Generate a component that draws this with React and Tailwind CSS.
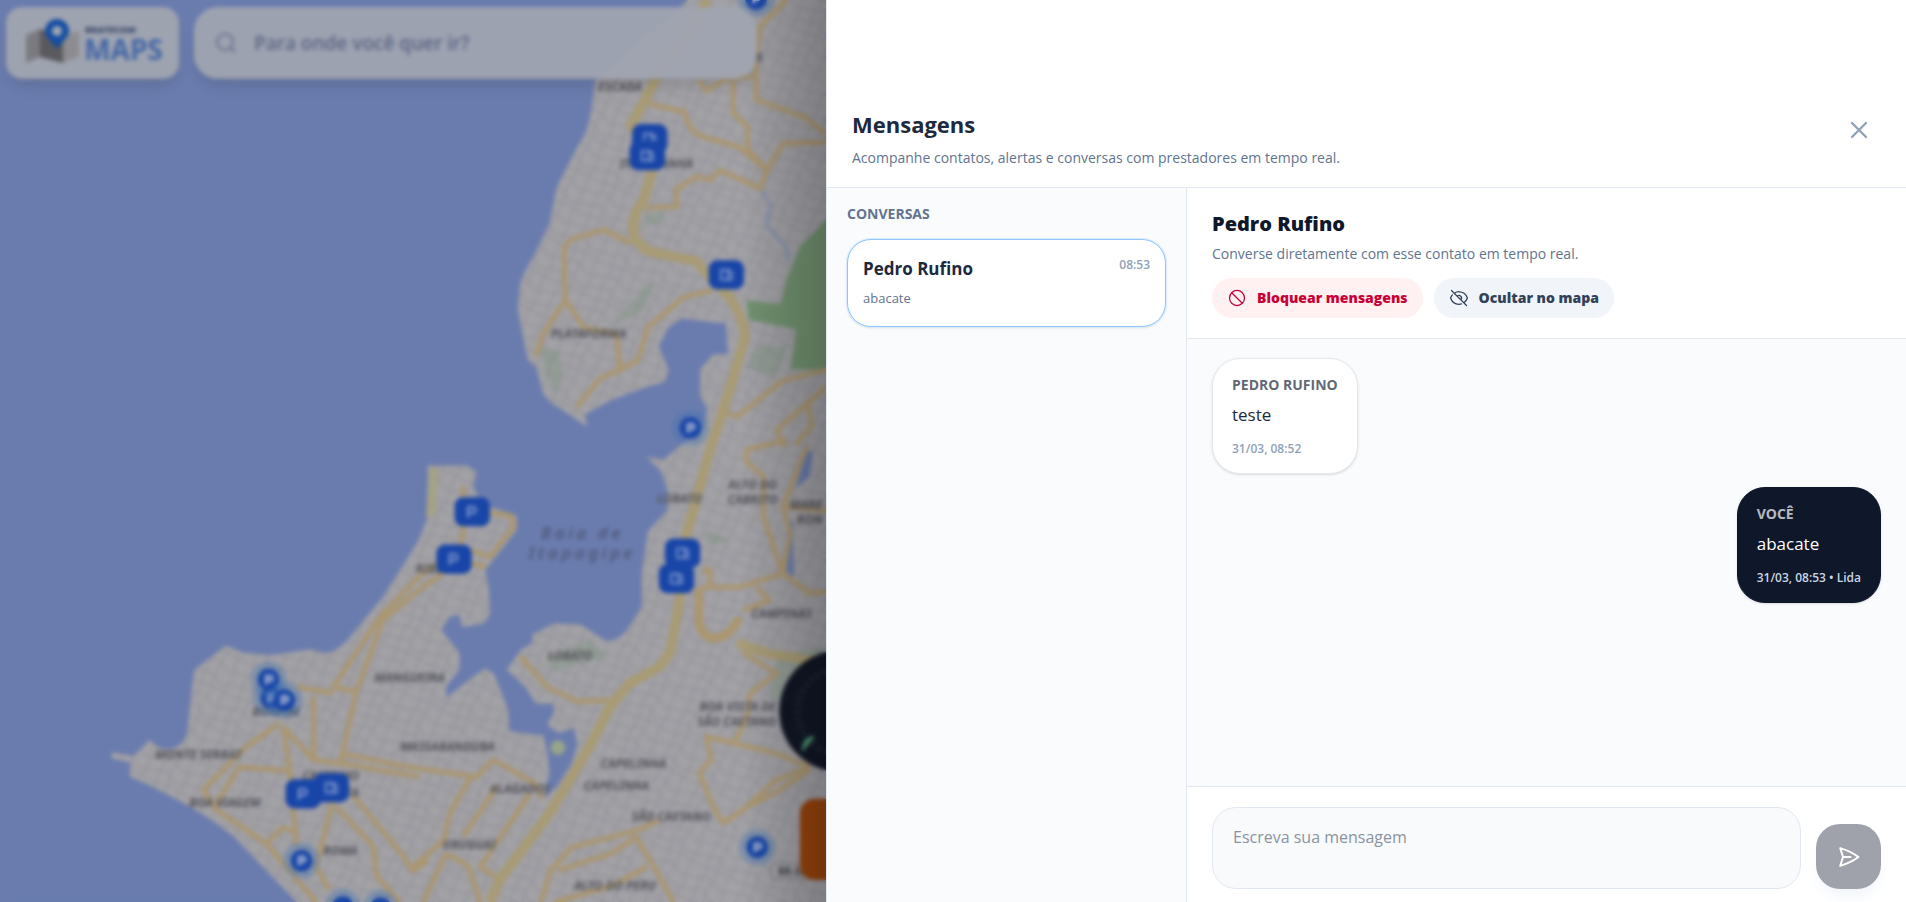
import React, { useState } from "react";
import {
  HiOutlineEyeSlash,
  HiOutlineNoSymbol,
  HiOutlinePaperAirplane,
  HiOutlineXMark,
} from "react-icons/hi2";
import { LuSearch } from "react-icons/lu";

const coast =
  "M566 0 L490 66 L486 93 Q484 108 475 121 L458 154 L452 184 L439 211 Q428 228 427 239 L426 255 L434 296 L441 302 L447 324 Q452 332 461 336 L483 351 L481 341 L503 329 L530 319 L547 314 L550 304 L542 285 L550 269 L561 262 L586 265 L597 266 L599 291 L586 292 L576 304 L576 326 L582 337 L578 352 L565 362 L546 378 L532 376 L544 388 L549 403 L549 420 L533 437 L528 472 L528 499 L516 518 Q508 528 498 527 L478 514 L456 513 L438 522 L438 529 L428 535 L417 551 L432 565 L441 579 L455 579 L456 586 L450 596 L459 603 L472 599 L475 612 L470 628 L459 646 L447 657 L452 636 L450 617 L447 605 L428 603 L419 601 L418 584 L412 568 L406 554 L399 550 L389 557 L367 574 L367 565 L378 551 L378 537 L363 518 L370 507 L378 506 L380 516 L398 513 L403 505 L402 483 L399 469 L425 436 L425 424 L406 418 L396 413 L389 400 L392 388 L384 383 L352 383 L351 428 L344 445 L333 463 L315 491 L288 524 Q276 538 266 537 L255 534 L223 539 L200 537 L186 531 L160 551 L158 565 L154 603 Q150 615 140 616 L132 616 L123 609 L110 622 L92 619 L92 624 L107 627 L107 639 L123 646 L148 659 Q172 672 192 688 L219 716 L244 742 L680 742 L680 0 Z";

const highways = [
  "M582 0 L560 36 L539 66 L529 85 L519 103 L535 128 L536 143 L529 165 Q520 176 521 190 Q523 202 535 207 L573 215 L584 228 L600 244 Q612 262 613 277 L600 321 L584 370 L564 442 L559 494 L551 537 L543 548 L518 562 L502 581 L485 614 L452 669 L411 724 L403 742",
  "M606 529 L633 538 L680 545",
];

const roads = [
  "M533 85 L563 92 Q567 108 577 112 L608 121 L631 140 L625 155 L610 148 L592 140 L584 148 L573 145 L556 156 L557 170 L530 171",
  "M631 140 L644 118 L680 117",
  "M603 66 L603 93 L615 104 L615 123 L631 140",
  "M647 0 L625 22 L622 47 L622 82 L661 96 L680 110",
  "M575 66 L581 75 L595 66 L619 63",
  "M519 200 L497 189 L472 196 Q464 200 464 208 L465 247 L447 274 L441 293",
  "M465 247 L481 270 L507 274 L510 304 L494 311 L474 335",
  "M510 304 L525 296 L533 269 L563 244 L586 239",
  "M680 304 L644 313 L606 343 L597 340",
  "M680 318 L664 332 L639 354 L646 368",
  "M664 332 L668 350 L654 366",
  "M647 362 L614 370 L614 380 L628 392 L628 425 L644 472 L608 483 L578 483",
  "M664 367 L644 417 L650 439 L644 472 L666 488 L680 487",
  "M644 417 L680 420",
  "M578 470 L584 468 L584 483 M611 502 L622 498 L633 494 L622 483",
  "M611 537 L639 554 L617 570 L614 592 L603 612",
  "M666 631 L639 620 L581 606 L585 625 L575 636 L588 666 L595 677 L614 664 L638 652 L666 633",
  "M666 631 L638 642 L614 664",
  "M428 540 L450 565 L475 577 L506 576",
  "M542 675 L524 683 L470 697 L453 716 L445 742",
  "M524 688 L503 702 L459 716",
  "M523 688 L539 715 L554 742",
  "M532 713 L503 729 L456 742",
  "M280 620 L337 631 L392 639 L406 625 L439 644 L447 657",
  "M387 639 L370 669 L365 691 L337 716",
  "M409 647 L381 688",
  "M436 653 L395 713 L412 724",
  "M367 702 L348 742 M367 702 L385 712 L395 742",
  "M345 474 L313 507 L274 565 L293 569 L315 510 L345 485 L378 462 L400 466",
  "M345 474 L378 450 L403 458 L423 433 L420 424 L403 422",
  "M381 400 L381 440 L378 450",
  "M244 565 L274 570",
  "M258 573 L258 625",
  "M293 569 L280 628",
  "M230 595 L203 614 L167 650 L178 666 L219 694 L260 742",
  "M233 598 L239 639 L244 696",
  "M233 598 L258 625 L280 628 L345 639",
  "M239 634 L197 631 L178 661",
  "M274 658 L260 713 L271 732",
  "M277 664 L307 696 L310 721 L329 742",
  "M291 655 L330 702 L340 716 L352 708",
  "M219 694 L232 681 L244 684",
];

const parks = [
  "M680 180 L658 203 L647 230 L642 250 L614 247 L616 263 L655 271 L650 304 L680 304 Z",
  "M530 178 L545 173 L547 181 L531 187 Z",
  "M530 236 L540 232 L528 256 L503 268 Z",
  "M444 285 L460 290 L463 306 L458 326 L450 310 Z",
  "M624 284 L648 285 L638 310 L614 302 Z",
  "M449 540 L485 526 L500 540 L455 552 Z",
  "M580 436 L602 444 L583 449 Z",
  "M640 540 L680 530 L680 575 L632 575 Z",
];

const labels = [
  ["ESCADA", 510, 75],
  ["ITACARANHA", 540, 138],
  ["PLATAFORMA", 484, 278],
  ["LOBATO", 559, 414],
  ["ALTO DO", 619, 402],
  ["CABRITO", 619, 415],
  ["MARE", 663, 419],
  ["RON", 666, 431],
  ["CAMPINAS", 643, 508],
  ["LOBATO", 469, 543],
  ["BOA VISTA DE", 607, 585],
  ["SÃO CAETANO", 606, 597],
  ["CAPELINHA", 521, 632],
  ["CAPELINHA", 507, 650],
  ["SÃO CAETANO", 552, 675],
  ["ALTO DO PERU", 506, 732],
  ["URUGUAI", 386, 698],
  ["ALAGADOS", 428, 652],
  ["MASSARANDUBA", 368, 618],
  ["MANGUEIRA", 337, 561],
  ["MONTE SERRAT", 163, 624],
  ["BOA VIAGEM", 185, 664],
  ["BONFIM", 227, 589],
  ["CAMINHO", 272, 642],
  ["AREIA", 281, 656],
  ["ROMA", 280, 703],
  ["RIBEIRA", 361, 471],
  ["A", 624, 51],
];

const stations = [
  [534, 114, "fuel"],
  [532, 128, "fuel"],
  [597, 226, "fuel"],
  [388, 421, "park"],
  [373, 460, "park"],
  [561, 455, "fuel"],
  [556, 476, "fuel"],
  [249, 653, "park"],
  [272, 648, "fuel"],
];

const providers = [
  [568, 352],
  [622, -1],
  [623, 697],
  [223, 574],
  [221, 559],
  [234, 576],
  [248, 708],
  [282, 746],
  [313, 747],
];

const messages = [
  { id: 1, author: "Pedro Rufino", text: "teste", meta: "31/03, 08:52", mine: false },
  { id: 2, author: "Você", text: "abacate", meta: "31/03, 08:53 • Lida", mine: true },
];

const CityMap = () => (
  <svg
    className="absolute inset-0 h-full w-full bg-[#6a7cae]"
    viewBox="0 0 680 742"
    preserveAspectRatio="xMinYMin slice"
    aria-hidden="true"
  >
    <defs>
      <pattern id="streets" width="34" height="30" patternUnits="userSpaceOnUse" patternTransform="rotate(24)">
        <path
          d="M0 6 L12 3 L22 9 L34 6 M0 17 L10 14 L19 20 L34 17 M0 26 L14 24 L34 26 M6 0 L4 14 L6 30 M15 0 L13 12 L15 30 M25 0 L27 15 L25 30"
          fill="none"
          stroke="#929198"
          strokeWidth="1"
        />
      </pattern>
      <linearGradient id="edge" x1="0" x2="1">
        <stop offset="0" stopColor="#000" stopOpacity="0" />
        <stop offset="1" stopColor="#000" stopOpacity="0.22" />
      </linearGradient>
    </defs>

    <path d={coast} fill="#a2a1a6" />
    <path d={coast} fill="url(#streets)" />

    {parks.map((d) => (
      <path key={d} d={d} fill="#71916f" opacity={d === parks[0] ? 1 : 0.3} />
    ))}

    {/* inner water */}
    <path d="M664 370 L669 372 L666 392 L654 402 Z M647 440 L652 425 L653 475 L647 470 Z" fill="#6a7cae" />
    <path d="M625 155 L634 168 L630 185 L648 205 L648 215" fill="none" stroke="#7d8fae" strokeWidth="2" />
    <circle cx="459" cy="615" r="6" fill="#98a58a" />
    <path d="M357 385 L354 425" stroke="#a5a284" strokeWidth="7" />

    <g fill="none" stroke="#ab966f" strokeWidth="4" strokeLinejoin="round">
      {roads.map((d) => (
        <path key={d} d={d} />
      ))}
    </g>
    <path d="M575 483 L575 512 Q578 526 590 525 Q602 522 608 508" fill="none" stroke="#ab966f" strokeWidth="7" />
    <g fill="none" stroke="#a89b74" strokeWidth="8" strokeLinejoin="round">
      {highways.map((d) => (
        <path key={d} d={d} />
      ))}
    </g>

    <g className="fill-[#56565e] font-['Noto_Sans'] text-[10px] font-bold italic" textAnchor="middle">
      {labels.map(([name, x, y]) => (
        <text key={`${name}-${x}`} x={x} y={y}>
          {name}
        </text>
      ))}
    </g>
    <g
      className="fill-[#4c5474] font-['Noto_Sans'] text-[14px] font-medium tracking-[3px] italic"
      textAnchor="middle"
    >
      <text x="479" y="443">Baia de</text>
      <text x="479" y="460">Itapagipe</text>
    </g>

    {providers.map(([x, y]) => (
      <g key={`${x}-${y}`}>
        <circle cx={x} cy={y} r="15" fill="#3f74b4" opacity="0.35" />
        <circle cx={x} cy={y} r="9" fill="#1845a8" />
        <path d={`M${x - 2} ${y + 4} v-7 h3 a2 2 0 0 1 0 4 h-3`} fill="none" stroke="#b4bdd4" strokeWidth="2" />
      </g>
    ))}

    {stations.map(([x, y, kind]) => (
      <g key={`${x}-${y}`}>
        <rect x={x - 14} y={y - 12} width="29" height="24" rx="7" fill="#1845a8" />
        {kind === "park" ? (
          <path d={`M${x - 3} ${y + 5} v-9 h5 a3 3 0 0 1 0 5 h-5`} fill="none" stroke="#8fa3d0" strokeWidth="1.6" />
        ) : (
          <path
            d={`M${x - 4} ${y + 4} v-8 h6 v8 z M${x + 2} ${y - 4} l3 2 v6 h-3`}
            fill="none"
            stroke="#8fa3d0"
            strokeWidth="1.4"
          />
        )}
      </g>
    ))}

    <g>
      <rect x="634" y="710" width="40" height="13" rx="3" fill="#a1a0a4" stroke="#77777c" />
      <text x="640" y="720" className="fill-[#3f3f46] font-['Noto_Sans'] text-[8px] font-bold">BR-324</text>
    </g>

    {/* speedometer and alert button */}
    <circle cx="691" cy="585" r="50" fill="#111625" />
    <circle cx="691" cy="585" r="35" fill="none" stroke="#262b3a" strokeWidth="5" strokeDasharray="2 4" />
    <path d="M660 617 L669 606 L663 609 Z" fill="#4f9a76" stroke="#4f9a76" strokeWidth="2" />
    <rect x="658" y="657" width="44" height="67" rx="12" fill="#97430d" />

    <rect x="610" y="0" width="70" height="742" fill="url(#edge)" />
  </svg>
);

const Logo = () => (
  <svg className="h-12 w-36" viewBox="0 0 144 48" role="img" aria-label="Maps">
    <path d="M5 16 L19 10 V38 L5 44 Z" fill="#7b7b7f" />
    <path d="M19 10 L42 18 V44 L19 38 Z" fill="#5a5a5e" />
    <path d="M42 16 L58 12 V38 L42 44 Z" fill="#8d8d91" />
    <path
      d="M36 0 a12 12 0 0 1 12 12 c0 7 -8 11 -12 18 c-4 -7 -12 -11 -12 -18 a12 12 0 0 1 12 -12 z"
      fill="#144da3"
    />
    <circle cx="36" cy="12" r="5" fill="#a3a8b4" />
    <text x="64" y="14" className="fill-[#3c4a6c] font-['Open_Sans'] text-[9px] font-extrabold">BRATECOM</text>
    <text x="63" y="41" className="fill-[#4467a6] font-['Open_Sans'] text-[28px] font-bold">MAPS</text>
  </svg>
);

const TopBar = () => (
  <div className="relative flex gap-[15px] py-[7px] pr-[69px] pl-[6px]">
    <div className="flex h-[72px] w-[173px] shrink-0 items-center justify-center rounded-2xl bg-[#9ea3b0] shadow-lg">
      <Logo />
    </div>
    <label className="flex h-[72px] min-w-0 flex-1 items-center gap-4 rounded-3xl bg-[#a0a4b0]/95 px-5 shadow-lg">
      <LuSearch className="h-6 w-6 shrink-0 text-[#67728f]" />
      <input
        type="text"
        aria-label="Destino"
        placeholder="Para onde você quer ir?"
        className="min-w-0 flex-1 bg-transparent text-[19px] font-semibold outline-none placeholder:text-[#5b6684]"
      />
    </label>
  </div>
);

const ConversationList = () => (
  <nav className="w-[360px] shrink-0 border-r border-slate-200 bg-[#fafbfd] px-5 py-4">
    <h3 className="text-sm leading-5 font-bold text-slate-500 uppercase">Conversas</h3>
    <button
      type="button"
      className="mt-[15px] block w-full rounded-3xl border border-blue-300 bg-white px-[15px] py-4 text-left shadow-sm ring-1 ring-blue-100"
    >
      <span className="flex items-start justify-between">
        <span className="text-[17px] leading-[26px] font-bold text-slate-800">Pedro Rufino</span>
        <span className="text-xs leading-[18px] font-semibold text-slate-400">08:53</span>
      </span>
      <span className="mt-1 block text-[13px] leading-6 text-slate-500">abacate</span>
    </button>
  </nav>
);

const Message = ({ author, text, meta, mine }) => (
  <li
    className={`w-fit rounded-[28px] border px-[19px] py-4 shadow-sm ${
      mine
        ? "self-end border-slate-900 bg-slate-900 text-white"
        : "self-start border-slate-200 bg-white text-slate-800"
    }`}
  >
    <p className="text-sm leading-5 font-bold uppercase opacity-70">{author}</p>
    <p className="mt-1 text-[17px] leading-8">{text}</p>
    <p className={`mt-[10px] text-xs leading-4 font-semibold ${mine ? "text-slate-300" : "text-slate-400"}`}>
      {meta}
    </p>
  </li>
);

const Composer = () => {
  const [draft, setDraft] = useState("");

  return (
    <form
      className="flex items-end gap-[15px] border-t border-slate-200 bg-white px-[25px] pt-5 pb-[13px]"
      onSubmit={(e) => e.preventDefault()}
    >
      <textarea
        rows={2}
        aria-label="Mensagem"
        placeholder="Escreva sua mensagem"
        value={draft}
        onChange={(e) => setDraft(e.target.value)}
        className="h-[82px] min-w-0 flex-1 resize-none rounded-3xl border border-slate-200 bg-slate-50 px-5 py-[15px] text-base leading-7 outline-none placeholder:text-[#8b93a3]"
      />
      <button
        type="submit"
        aria-label="Enviar"
        className="flex h-[65px] w-[65px] items-center justify-center rounded-3xl bg-[#9fa2ab] text-white shadow-lg shadow-slate-100"
      >
        <HiOutlinePaperAirplane className="h-6 w-6 stroke-2" />
      </button>
    </form>
  );
};

const App = () => {
  return (
    <div className="flex h-screen overflow-hidden font-['Open_Sans',sans-serif]">
      <section className="relative min-w-0 flex-1 overflow-hidden">
        <CityMap />
        <TopBar />
        <div className="absolute inset-0 backdrop-blur-[2px]" />
      </section>

      <aside className="flex w-[1080px] max-w-full shrink-0 flex-col border-l border-slate-200 bg-white">
        <header className="flex items-start justify-between border-b border-slate-200 px-[25px] pt-27 pb-[19px]">
          <div>
            <h1 className="text-[22px] leading-8 font-bold text-slate-800">Mensagens</h1>
            <p className="mt-2 text-sm leading-5 text-slate-500">
              Acompanhe contatos, alertas e conversas com prestadores em tempo real.
            </p>
          </div>
          <button type="button" aria-label="Fechar" className="p-2 text-slate-400">
            <HiOutlineXMark className="h-7 w-7 stroke-2" />
          </button>
        </header>

        <div className="flex min-h-0 flex-1">
          <ConversationList />

          <section className="flex min-w-0 flex-1 flex-col">
            <div className="border-b border-slate-200 px-[25px] py-5">
              <h2 className="text-xl leading-8 font-extrabold text-slate-900">Pedro Rufino</h2>
              <p className="mt-1 text-sm leading-5 text-slate-500">Converse diretamente com esse contato em tempo real.</p>
              <div className="mt-[14px] flex gap-[11px]">
                <button
                  type="button"
                  className="flex h-10 items-center gap-[10px] rounded-full bg-rose-50 px-[15px] text-sm font-extrabold text-rose-700"
                >
                  <HiOutlineNoSymbol className="h-5 w-5" />
                  Bloquear mensagens
                </button>
                <button
                  type="button"
                  className="flex h-10 items-center gap-[10px] rounded-full bg-slate-100 px-[15px] text-sm font-extrabold text-slate-700"
                >
                  <HiOutlineEyeSlash className="h-5 w-5" />
                  Ocultar no mapa
                </button>
              </div>
            </div>

            <ul className="flex min-h-0 flex-1 flex-col gap-[13px] overflow-y-auto bg-[#fafbfd] px-[25px] py-[19px]">
              {messages.map((m) => (
                <Message key={m.id} {...m} />
              ))}
            </ul>

            <Composer />
          </section>
        </div>
      </aside>
    </div>
  );
};

export default App;
